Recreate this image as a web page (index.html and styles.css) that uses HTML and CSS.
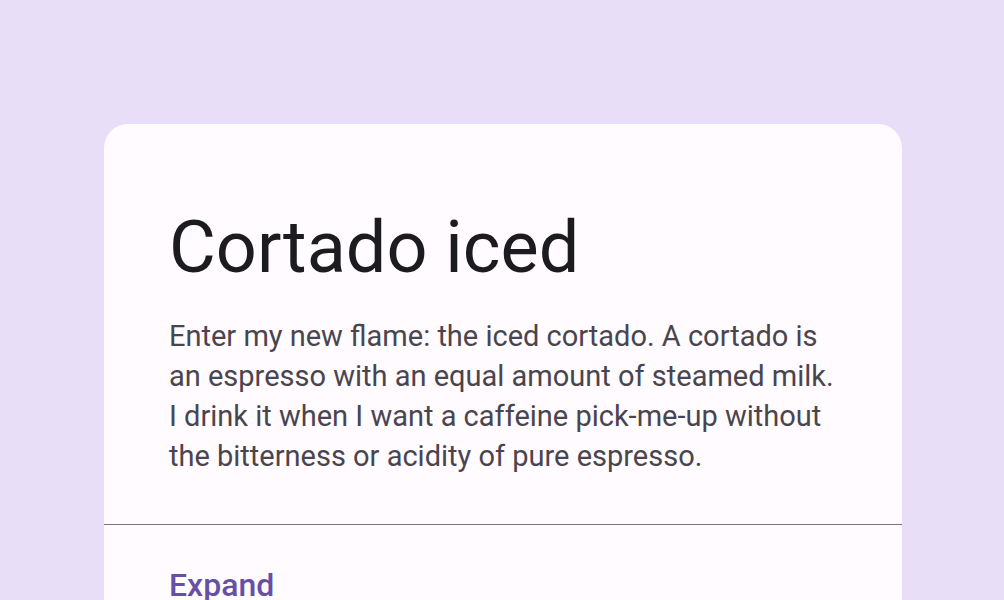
FILE: index.html
```html
<!DOCTYPE html>
<html>
<head>
<meta charset="utf-8">
<link rel="stylesheet" href="styles.css">
</head>
<body>
<main class="page">
  <article class="card">
    <div class="card-body">
      <h1 class="title">Cortado iced</h1>
      <p class="text">Enter my new flame: the iced cortado. A cortado is an espresso with an equal amount of steamed milk. I drink it when I want a caffeine pick-me-up without the bitterness or acidity of pure espresso.</p>
    </div>
    <hr class="divider">
    <div class="actions">
      <button class="expand">Expand</button>
    </div>
  </article>
</main>
</body>
</html>
```
FILE: styles.css
```css
html, body {
  margin: 0;
  padding: 0;
  height: 100%;
  overflow: hidden;
}
body {
  background: #E8DEF8;
  font-family: Roboto, "Noto Sans", sans-serif;
}
.page {
  padding: 124px 102px 0 104px;
}
.card {
  background: #FFFBFE;
  border-radius: 24px;
  width: 798px;
  min-height: 560px;
}
.card-body {
  padding: 84px 64px 0 65px;
}
.title {
  margin: 0;
  font-weight: 400;
  font-size: 72px;
  line-height: 80px;
  color: #1C1B1F;
}
.text {
  margin: 28px 0 0;
  font-size: 29px;
  line-height: 40px;
  color: #49454F;
}
.divider {
  margin: 48px 0 0;
  border: 0;
  border-top: 1px solid #79747E;
}
.actions {
  padding: 40px 64px 0 65px;
}
.expand {
  background: none;
  border: 0;
  padding: 0;
  font-family: inherit;
  font-size: 32px;
  line-height: 40px;
  font-weight: 500;
  color: #6750A4;
}
```
